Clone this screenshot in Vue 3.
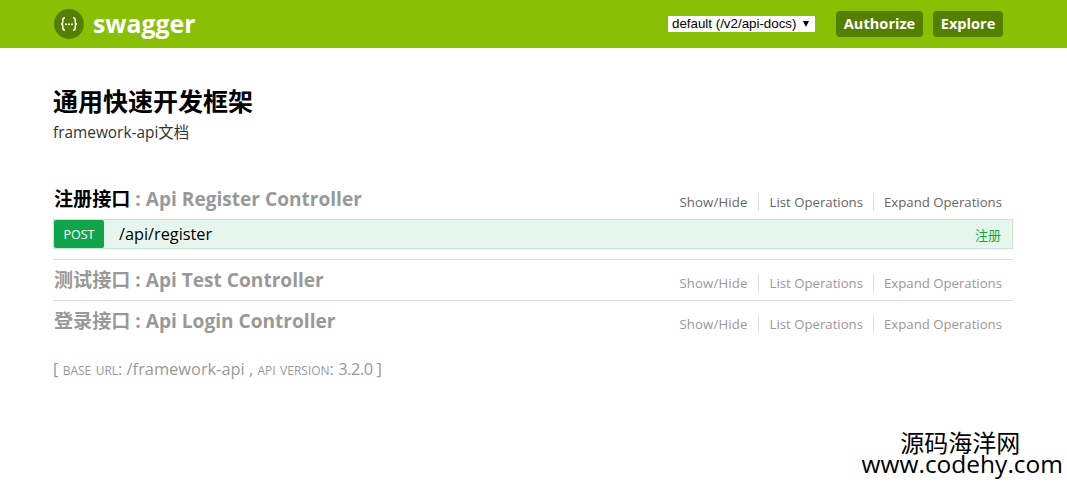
<template>
  <div class="page">
    <header class="header">
      <div class="header__inner">
        <a class="logo">
          <svg class="logo__icon" width="30" height="30" viewBox="0 0 30 30">
            <circle cx="15" cy="15" r="15" fill="#547f00" />
            <path
              d="M11 8.8c-1.6 0-2.2.7-2.2 2.1v2.3c0 1-.6 1.6-1.7 1.8 1.1.2 1.7.8 1.7 1.8v2.3c0 1.4.6 2.1 2.2 2.1M19 8.8c1.6 0 2.2.7 2.2 2.1v2.3c0 1 .6 1.6 1.7 1.8-1.1.2-1.7.8-1.7 1.8v2.3c0 1.4-.6 2.1-2.2 2.1"
              fill="none"
              stroke="#fff"
              stroke-width="1.5"
            />
            <circle cx="12" cy="15.3" r="1" fill="#fff" />
            <circle cx="15" cy="15.3" r="1" fill="#fff" />
            <circle cx="18" cy="15.3" r="1" fill="#fff" />
          </svg>
          <span class="logo__text">swagger</span>
        </a>
        <div class="header__right">
          <div class="spec-select">
            <select class="spec-select__input">
              <option>default (/v2/api-docs)</option>
            </select>
          </div>
          <button class="btn btn--authorize">Authorize</button>
          <button class="btn btn--explore">Explore</button>
        </div>
      </div>
    </header>

    <main class="content">
      <h1 class="title">通用快速开发框架</h1>
      <p class="desc">framework-api文档</p>

      <ul class="resources">
        <li v-for="res in resources" :key="res.tag" class="resource" :class="{ 'resource--open': res.open }">
          <div class="resource__head">
            <h2 class="resource__title">
              <span class="resource__tag">{{ res.tag }}</span> : {{ res.name }}
            </h2>
            <ul class="resource__links">
              <li>Show/Hide</li>
              <li>List Operations</li>
              <li>Expand Operations</li>
            </ul>
          </div>
          <div v-for="op in res.ops" :key="op.path" class="op">
            <span class="op__method">{{ op.method }}</span>
            <span class="op__path">{{ op.path }}</span>
            <span class="op__summary">{{ op.summary }}</span>
          </div>
        </li>
      </ul>

      <p class="footer">
        [ <span class="footer__key">base url</span>: /framework-api , <span class="footer__key">api version</span>: <span class="footer__version">3.2.0 ]</span>
      </p>
    </main>

    <div class="watermark">
      <div class="watermark__cn">源码海洋网</div>
      <div class="watermark__en">www.codehy.com</div>
    </div>
  </div>
</template>

<script setup>
const resources = [
  {
    tag: '注册接口',
    name: 'Api Register Controller',
    open: true,
    ops: [{ method: 'POST', path: '/api/register', summary: '注册' }]
  },
  { tag: '测试接口', name: 'Api Test Controller', open: false, ops: [] },
  { tag: '登录接口', name: 'Api Login Controller', open: false, ops: [] }
]
</script>

<style>
html,
body {
  margin: 0;
  background: #fff;
}
</style>

<style scoped>
.page {
  position: relative;
  height: 483px;
  overflow: hidden;
  font-family: "Open Sans", "Noto Sans CJK SC", sans-serif;
  color: #333;
}
.header {
  height: 48px;
  background: #89bf04;
}
.header__inner {
  display: flex;
  align-items: center;
  justify-content: space-between;
  height: 48px;
  padding: 0 64px 0 54px;
}
.logo {
  display: flex;
  align-items: center;
  gap: 9px;
}
.logo__text {
  color: #fff;
  font-size: 24.8px;
  font-weight: 700;
  line-height: 46px;
  height: 48px;
}
.header__right {
  display: flex;
  align-items: center;
}
.spec-select {
  position: relative;
  width: 149px;
  height: 18px;
}
.spec-select::after {
  content: "";
  position: absolute;
  left: 136px;
  top: 6px;
  border-left: 3.5px solid transparent;
  border-right: 3.5px solid transparent;
  border-top: 6px solid #000;
  pointer-events: none;
}
.spec-select__input {
  display: block;
  appearance: none;
  width: 149px;
  height: 18px;
  padding: 0 0 0 4px;
  border: 1px solid #89bf04;
  border-radius: 0;
  background: #fff;
  color: #000;
  font-family: "Liberation Sans", sans-serif;
  font-size: 13.33px;
  line-height: 16px;
}
.btn {
  height: 26px;
  padding: 0 0 2px;
  border: 0;
  border-radius: 4px;
  background: #547f00;
  color: #fff;
  font-family: "Open Sans", sans-serif;
  font-size: 14.6px;
  font-weight: 700;
}
.btn--authorize {
  width: 87px;
  margin-left: 20px;
}
.btn--explore {
  width: 70px;
  margin-left: 10px;
}
.content {
  padding: 37px 54px 0 53px;
}
.title {
  margin: 0;
  color: #000;
  font-size: 25px;
  line-height: 32px;
  font-weight: 700;
}
.desc {
  margin: 6px 0 0;
  font-size: 15.4px;
  line-height: 20px;
}
.resources {
  list-style: none;
  margin: 37px 0 0;
  padding: 0;
}
.resource {
  border-bottom: 1px solid #ddd;
}
.resource:last-child {
  border-bottom: 0;
}
.resource__head {
  display: flex;
  align-items: center;
  justify-content: space-between;
  height: 40px;
}
.resource--open .resource__head {
  height: 39px;
}
.resource__title {
  margin: 0;
  padding: 0 0 2px 1px;
  color: #999;
  font-size: 19.1px;
  font-weight: 700;
}
.resource--open .resource__title {
  padding-bottom: 4px;
}
.resource--open .resource__tag {
  color: #000;
}
.resource__links {
  display: flex;
  list-style: none;
  margin: 6px 0 0;
  padding: 0 11px 0 0;
  color: #999;
  font-size: 13.2px;
}
.resource--open .resource__links {
  margin-top: 4px;
  color: #666;
}
.resource__links li {
  padding: 0 10.5px;
  border-right: 1px solid #ddd;
  line-height: 18px;
}
.resource__links li:first-child {
  letter-spacing: 0.15px;
}
.resource__links li:nth-child(2) {
  padding-right: 10px;
}
.resource__links li:last-child {
  padding: 0 0 0 10px;
  border-right: 0;
}
.op {
  display: flex;
  align-items: center;
  height: 28px;
  margin-bottom: 10px;
  border: 1px solid #c3e8d1;
  background: #e7f6ec;
}
.op__method {
  width: 50px;
  height: 28px;
  border-radius: 2px;
  background: #10a54a;
  color: #fff;
  font-size: 12.5px;
  line-height: 30px;
  text-align: center;
}
.op__path {
  flex: 1;
  margin-left: 15px;
  color: #000;
  font-size: 16.3px;
}
.op__summary {
  margin-right: 11px;
  color: #10a54a;
  font-size: 13px;
}
.footer {
  margin: 16px 0 0;
  color: #999;
  font-size: 16.4px;
}
.footer__key {
  font-variant: small-caps;
  font-size: 17px;
}
.footer__version {
  letter-spacing: -0.45px;
}
.watermark {
  position: absolute;
  right: 4px;
  bottom: 9px;
  color: #000;
  text-align: center;
  line-height: 21px;
}
.watermark__cn {
  padding-right: 4px;
  font-size: 24px;
}
.watermark__en {
  font-size: 24.5px;
}
</style>
